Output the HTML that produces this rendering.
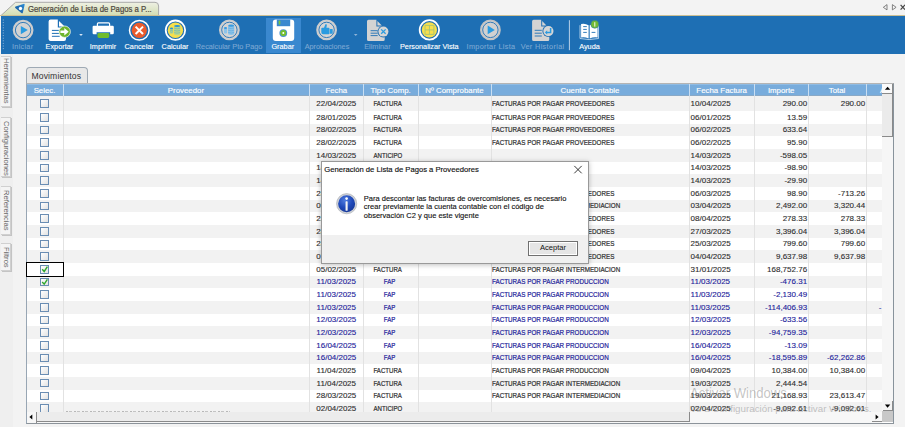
<!DOCTYPE html>
<html><head><meta charset="utf-8">
<style>
*{margin:0;padding:0;box-sizing:border-box}
html,body{width:905px;height:427px;overflow:hidden;background:#f3f3f3;font-family:"Liberation Sans",sans-serif}
.a{position:absolute}
svg{position:absolute;overflow:visible}
/* toolbar */
#tb{position:absolute;left:1px;top:16px;width:904px;height:38px;background:#1e6fb4}
.lab{position:absolute;top:41.7px;height:9px;line-height:9px;font-size:7.3px;color:#fff;white-space:nowrap;text-align:center;width:80px;-webkit-text-stroke:.12px #fff}
.lab.dis{color:#7ba7d3;-webkit-text-stroke:.1px #7ba7d3}
/* left tabs */
.vt{position:absolute;left:1px;width:9.8px;background:#f4f4f4;border:1px solid #d0d0d0;border-left:none;box-shadow:1px 1px 0 #c4c4c4}
.vtt{position:absolute;white-space:nowrap;font-size:7.6px;color:#666;transform-origin:0 0;transform:rotate(90deg)}
/* grid */
#grid{position:absolute;left:26px;top:83px;width:868px;height:341px;border:1px solid #98a6b4;background:#fff;overflow:hidden}
.r{position:absolute;left:26.5px;width:855.7px}
.g{background:#f2f2f2}
.w{background:#fff}
.vl{position:absolute;top:96px;width:1px;height:315.5px;background:#e2e2e2}
.hdr{position:absolute;left:26.5px;top:83.6px;width:855.7px;height:12.4px;background:#78acdc;border-top:1px solid #8fbbe3;border-bottom:1px solid #8aa9c6}
.hl{position:absolute;top:84.9px;height:12px;line-height:12px;font-size:7.85px;color:#fff;text-align:center;white-space:nowrap;-webkit-text-stroke:.15px #fff}
.hd{position:absolute;top:83.6px;width:1px;height:12px;background:#c9def2}
.tx{position:absolute;height:9px;line-height:9px;font-size:8px;color:#2e2e2e;white-space:nowrap;letter-spacing:0;-webkit-text-stroke:.12px #2e2e2e}
.c{text-align:center}
.rt{text-align:right}
.bl{color:#22229a;-webkit-text-stroke:.12px #22229a}
.tx i{font-style:normal;display:inline-block;transform:scaleX(.76);-webkit-text-stroke:.22px currentColor}
.tx.cp{transform:scaleX(.785);transform-origin:0 0;-webkit-text-stroke:.22px currentColor}
.msg{left:363.8px;font-size:7.5px;line-height:8.3px;color:#111;white-space:nowrap;-webkit-text-stroke:.12px #111}
.cb{position:absolute;left:40.2px;width:8.6px;height:8.6px;border:1px solid #6a8db3;background:linear-gradient(135deg,#fff,#e2e2e2)}
</style></head><body>

<!-- top strip -->
<svg width="905" height="16" style="left:0;top:0">
  <defs><linearGradient id="tg" x1="0" y1="0" x2="0" y2="1"><stop offset="0" stop-color="#eff1e4"/><stop offset="1" stop-color="#d2ddb2"/></linearGradient></defs>
  <path d="M1 15.5 L15.5 2.3 L155 2.3 Q158.6 2.3 158.6 6 L158.6 15.5 Z" fill="url(#tg)" stroke="#a9a9a9" stroke-width="1"/>
  <defs><linearGradient id="ic" x1="1" y1="0" x2="0" y2="1"><stop offset="0" stop-color="#2f8fd8"/><stop offset="1" stop-color="#164f93"/></linearGradient></defs>
  <path d="M15.6 6.6 L23.4 3.9 Q25 3.5 24.6 5 L22.9 12.6 Q22.5 14 21.4 13 L15.3 8 Q14.6 7 15.6 6.6Z" fill="url(#ic)"/>
  <circle cx="20.5" cy="8.5" r="1.7" fill="#fff"/>
  <line x1="0" y1="15.5" x2="905" y2="15.5" stroke="#cbbf94" stroke-width="1"/>
  <path d="M887 4.6 L883.3 7.3 L887 9.9 Z" fill="none" stroke="#666" stroke-width=".8"/>
  <path d="M892.4 4.6 L896.1 7.3 L892.4 9.9 Z" fill="none" stroke="#666" stroke-width=".8"/>
  <path d="M900.6 4.8 L905 9.7 M905 4.8 L900.6 9.7" stroke="#444" stroke-width="1.2"/>
</svg>
<div class="a" style="left:28px;top:4.5px;font-size:8.2px;line-height:10px;color:#4e4840;white-space:nowrap;-webkit-text-stroke:.2px #4e4840;transform:scaleX(.948);transform-origin:0 0">Generación de Lista de Pagos a P...</div>

<!-- toolbar -->
<div id="tb"></div>
<div class="a" style="left:265.7px;top:17.8px;width:35.4px;height:34.8px;background:#3a88cf"></div>
<svg width="905" height="54" style="left:0;top:0">
  <!-- grip -->
  <line x1="3.3" y1="19.5" x2="3.3" y2="49.5" stroke="#8fb6dd" stroke-width="1" stroke-dasharray="1 1.6"/>
  <!-- Iniciar -->
  <circle cx="23.1" cy="30.1" r="9.6" fill="#d3d3d3" stroke="#cdcdcd" stroke-width="1.6"/>
  <circle cx="23.1" cy="30.1" r="7.7" fill="none" stroke="#1e6fb4" stroke-width=".9"/>
  <path d="M20.8 26 L27.8 30.1 L20.8 34.2Z" fill="#2a9be0"/>
  <!-- Exportar -->
  <path d="M50.6 19.6 H57.8 V27.6 H66 V38.9 Q66 40.9 64 40.9 H50.6 Q48.6 40.9 48.6 38.9 V21.6 Q48.6 19.6 50.6 19.6Z" fill="#fff"/>
  <path d="M59 21 L64.6 26.6 L59 26.6Z" fill="#fff"/>
  <path d="M51.9 30.4 H59.7 M51.9 33.4 H59.7 M51.9 36.3 H59.7" stroke="#1e6fb4" stroke-width="1"/>
  <circle cx="64.7" cy="31.7" r="5.7" fill="#6db52e" stroke="#fff" stroke-width=".7"/>
  <path d="M60.4 30.4 H64.3 V27.9 L68.7 31.7 L64.3 35.5 V33 H60.4Z" fill="#fff"/>
  <path d="M79.2 34 L82.8 34 L81 36Z" fill="#d9e7f5"/>
  <!-- Imprimir -->
  <path d="M97.4 26 V23.9 Q97.4 22.9 98.4 22.9 H108.6 Q109.6 22.9 109.6 23.9 V26" fill="none" stroke="#fff" stroke-width="1.2"/>
  <path d="M93.8 25.8 H112.6 Q113.8 25.8 113.8 27 V33.1 Q113.8 34.3 112.6 34.3 H110.2 V32.3 H96.6 V34.3 H93.8 Q92.6 34.3 92.6 33.1 V27 Q92.6 25.8 93.8 25.8Z" fill="#fff"/>
  <rect x="97.5" y="32.9" width="11.7" height="5" rx="1.4" fill="#70bc2c"/>
  <!-- Cancelar -->
  <circle cx="139.3" cy="30.3" r="9.8" fill="#1e6fb4" stroke="#fff" stroke-width="1.5"/>
  <circle cx="139.3" cy="30.3" r="7.6" fill="#ea5b2c"/>
  <path d="M135.6 26.6 L143 34 M143 26.6 L135.6 34" stroke="#fff" stroke-width="2"/>
  <!-- Calcular -->
  <circle cx="175.45" cy="30.2" r="9.7" fill="#1e6fb4" stroke="#fff" stroke-width="1.8"/>
  <circle cx="175.45" cy="30.2" r="7.7" fill="#f7df4c"/>
  <path d="M169.9 28.2 V33.2 Q171.5 34.2 173.1 33.2 V28.2Z" fill="#b8d68a"/>
  <path d="M169.9 30 Q171.5 31 173.1 30 M169.9 31.7 Q171.5 32.7 173.1 31.7" fill="none" stroke="#5fb0c0" stroke-width=".6"/>
  <ellipse cx="171.5" cy="28.3" rx="1.6" ry=".9" fill="#2592d8"/>
  <path d="M174.1 26 V34.6 Q177.15 35.8 180.2 34.6 V26Z" fill="#b8d68a"/>
  <path d="M174.1 28.2 Q177.15 29.4 180.2 28.2 M174.1 30.4 Q177.15 31.6 180.2 30.4 M174.1 32.6 Q177.15 33.8 180.2 32.6" fill="none" stroke="#5fb0c0" stroke-width=".6"/>
  <ellipse cx="177.15" cy="26" rx="3.05" ry="1.1" fill="#2592d8"/>
  <!-- Recalcular -->
  <circle cx="229.4" cy="29.9" r="9.6" fill="#d5d5d5" stroke="#cdcdcd" stroke-width="1.6"/>
  <circle cx="229.4" cy="29.9" r="7.7" fill="none" stroke="#1e6fb4" stroke-width=".9"/>
  <path d="M223.9 27.9 V32.9 Q225.5 33.9 227.1 32.9 V27.9Z" fill="#8cc4ea"/>
  <ellipse cx="225.5" cy="28" rx="1.6" ry=".9" fill="#3a9be0"/>
  <path d="M228.1 25.7 V34.3 Q231.15 35.5 234.2 34.3 V25.7Z" fill="#8cc4ea"/>
  <path d="M228.1 28 Q231.15 29.2 234.2 28 M228.1 30.2 Q231.15 31.4 234.2 30.2 M228.1 32.4 Q231.15 33.6 234.2 32.4" fill="none" stroke="#5aa8de" stroke-width=".6"/>
  <ellipse cx="231.15" cy="25.7" rx="3.05" ry="1.1" fill="#3a9be0"/>
  <!-- Grabar -->
  <rect x="272.8" y="19.6" width="21.4" height="21.3" rx="3" fill="#fff"/>
  <rect x="276.8" y="19.6" width="13.4" height="6.6" fill="#3a88cf"/>
  <rect x="278.7" y="20.6" width="1.6" height="3.9" rx=".6" fill="#7cc83a"/>
  <circle cx="283.3" cy="33.1" r="3.9" fill="#4a92d6"/>
  <circle cx="283.3" cy="33.1" r="3" fill="#74c02e"/>
  <circle cx="283.3" cy="33.1" r="1" fill="#fff"/>
  <!-- Aprobaciones -->
  <circle cx="326.6" cy="29.9" r="9.6" fill="#d5d5d5" stroke="#cdcdcd" stroke-width="1.6"/>
  <circle cx="326.6" cy="29.9" r="7.7" fill="none" stroke="#1e6fb4" stroke-width=".9"/>
  <path d="M321.3 28.6 Q321.3 27.7 322.3 27.7 L324 27.7 L325.2 24.8 Q325.6 23.8 326.4 24.2 Q327 24.6 326.8 25.6 L326.4 27.7 L328.6 27.7 Q329.5 27.8 329.5 28.8 L329.5 33.4 Q329.5 34.2 328.6 34.2 L323.2 34.2 Q321.3 34.2 321.3 32.2Z" fill="#2a9be0"/>
  <rect x="329.9" y="28.9" width="2.8" height="4.9" rx=".5" fill="#2a9be0"/>
  <path d="M353.9 34 L357.5 34 L355.7 36Z" fill="#8fb3d6"/>
  <!-- Eliminar -->
  <path d="M368.5 19.7 H376.4 V26.6 H384.7 V39.4 Q384.7 40.9 383.2 40.9 H368.5 Q367 40.9 367 39.4 V21.2 Q367 19.7 368.5 19.7Z" fill="#d3d3d3"/>
  <path d="M377.4 21 L381.8 25.6 L377.4 25.6Z" fill="#d3d3d3"/>
  <path d="M370.6 30.7 H377.7 M370.6 33.2 H377.7 M370.6 35.6 H377.7" stroke="#1e6fb4" stroke-width=".9"/>
  <circle cx="383.4" cy="31.6" r="5.9" fill="#1e6fb4"/>
  <circle cx="383.4" cy="31.6" r="5" fill="#d6d6d6"/>
  <path d="M381.2 29.4 L385.6 33.8 M385.6 29.4 L381.2 33.8" stroke="#2a9be0" stroke-width="1.3"/>
  <!-- Personalizar Vista -->
  <circle cx="429.4" cy="29.9" r="9.7" fill="#1e6fb4" stroke="#fff" stroke-width="1.8"/>
  <circle cx="429.4" cy="29.9" r="7.6" fill="#f7df4c"/>
  <path d="M425 25.4 H433.9 V34.4 H425Z M429.45 25.4 V34.4 M425 29.9 H433.9" fill="none" stroke="#9cc27e" stroke-width=".8"/>
  <!-- Importar Lista -->
  <circle cx="490.4" cy="29.9" r="9.6" fill="#d1d1d1" stroke="#c4c4c4" stroke-width="1.6"/>
  <circle cx="490.4" cy="29.9" r="7.7" fill="none" stroke="#1e6fb4" stroke-width=".9"/>
  <path d="M487.7 25.5 L494.8 29.9 L487.7 34.3Z" fill="#2a9be0"/>
  <!-- Ver Historial -->
  <path d="M533.6 19.7 H541.2 V26.6 H549.3 V39.4 Q549.3 40.9 547.8 40.9 H533.6 Q532.1 40.9 532.1 39.4 V21.2 Q532.1 19.7 533.6 19.7Z" fill="#d3d3d3"/>
  <path d="M542.2 21 L546.4 25.6 L542.2 25.6Z" fill="#d3d3d3"/>
  <path d="M534.7 30.3 H541.8 M534.7 33.2 H541.8 M534.7 36 H541.8" stroke="#1e6fb4" stroke-width=".9"/>
  <circle cx="548.4" cy="31.1" r="6" fill="#1e6fb4"/>
  <circle cx="548.4" cy="31.1" r="5.1" fill="#d6d6d6"/>
  <path d="M550.6 28 V32.4 H546.4" fill="none" stroke="#2a9be0" stroke-width="1.5"/>
  <path d="M547.2 30.2 L544.9 32.4 L547.2 34.6Z" fill="#2a9be0"/>
  <!-- separator -->
  <line x1="569.4" y1="20.2" x2="569.4" y2="50.2" stroke="#dfeaf6" stroke-width=".8"/>
  <!-- Ayuda -->
  <path d="M580 25.2 L580 38.5 L589.1 39.6 L598.5 38.5 L598.5 25.2" fill="none" stroke="#cfe2f4" stroke-width=".8"/>
  <path d="M581.1 24 Q585 23 588.6 25.2 V38.6 Q585 36.6 581.1 37.4Z" fill="#fff"/>
  <path d="M597.6 24 Q593.4 23 589.7 25.2 V38.6 Q593.4 36.6 597.6 37.4Z" fill="#fff"/>
  <path d="M583.2 26.6 H586.8 M583.2 29.4 H586.8 M583.2 32.4 H586.8 M591.6 32.4 H595.4" stroke="#1e6fb4" stroke-width=".9"/>
  <circle cx="594.8" cy="24.3" r="4" fill="#72bb34" stroke="#1e6fb4" stroke-width=".5"/>
  <line x1="594.8" y1="22.2" x2="594.8" y2="26.6" stroke="#fff" stroke-width=".9"/>
</svg>
<div class="lab dis" style="left:-17.3px;letter-spacing:.25px">Iniciar</div>
<div class="lab" style="left:19.4px">Exportar</div>
<div class="lab" style="left:63px">Imprimir</div>
<div class="lab" style="left:99.2px">Cancelar</div>
<div class="lab" style="left:135px">Calcular</div>
<div class="lab dis" style="left:189.1px">Recalcular Pto Pago</div>
<div class="lab" style="left:242.8px">Grabar</div>
<div class="lab dis" style="left:287px">Aprobaciones</div>
<div class="lab dis" style="left:337.4px">Eliminar</div>
<div class="lab" style="left:389.3px">Personalizar Vista</div>
<div class="lab dis" style="left:451px;letter-spacing:.3px">Importar Lista</div>
<div class="lab dis" style="left:502.6px;letter-spacing:.35px">Ver Historial</div>
<div class="lab" style="left:549.5px">Ayuda</div>

<!-- left panel -->
<div class="a" style="left:0;top:54px;width:13px;height:373px;background:#efefef"></div>
<div class="vt" style="top:55.7px;height:51.7px"></div>
<div class="vtt" style="left:11px;top:58px">Herramientas</div>
<div class="vt" style="top:116.9px;height:60.3px"></div>
<div class="vtt" style="left:11px;top:120.7px">Configuraciones</div>
<div class="vt" style="top:186.3px;height:48.7px"></div>
<div class="vtt" style="left:11px;top:190.3px">Referencias</div>
<div class="vt" style="top:243.2px;height:28.3px"></div>
<div class="vtt" style="left:11px;top:246.8px">Filtros</div>

<!-- Movimientos tab -->
<div class="a" style="left:26.2px;top:67.1px;width:61.4px;height:17px;background:#e8e8e8;border:1px solid #9ea9b4;border-bottom:none;border-radius:4px 4px 0 0"></div>
<div class="a" style="left:31.5px;top:70.5px;font-size:8.6px;line-height:10px;color:#333;white-space:nowrap;letter-spacing:.12px">Movimientos</div>

<!-- grid -->
<div class="a" style="left:26px;top:83px;width:868px;height:340.5px;border:1px solid #98a6b4;border-top-color:#b4b4b4;border-right:1.6px solid #88939c;border-bottom:1.4px solid #8c939a;background:#fff"></div>
<div class="hdr"></div>
<span class="hl" style="left:26.5px;width:36.1px">Selec.</span><span class="hl" style="left:62.6px;width:246.7px">Proveedor</span><div class="hd" style="left:62.6px"></div><span class="hl" style="left:309.3px;width:54.0px">Fecha</span><div class="hd" style="left:309.3px"></div><span class="hl" style="left:363.3px;width:54.6px">Tipo Comp.</span><div class="hd" style="left:363.3px"></div><span class="hl" style="left:417.9px;width:73.1px">Nº Comprobante</span><div class="hd" style="left:417.9px"></div><span class="hl" style="left:491.0px;width:198.0px">Cuenta Contable</span><div class="hd" style="left:491.0px"></div><span class="hl" style="left:689.0px;width:65.3px">Fecha Factura</span><div class="hd" style="left:689.0px"></div><span class="hl" style="left:754.3px;width:53.8px">Importe</span><div class="hd" style="left:754.3px"></div><span class="hl" style="left:808.1px;width:58.0px">Total</span><div class="hd" style="left:808.1px"></div><span class="hl" style="left:876.6px;width:12.0px">A</span><div class="hd" style="left:866.1px"></div>
<div class="r g" style="top:96.00px;height:15.00px"></div><div class="cb" style="top:99.20px"></div><span class="tx c" style="left:309.3px;width:54.0px;top:98.90px">22/04/2025</span><span class="tx c" style="left:360.3px;width:54.6px;top:98.90px"><i class="cp">FACTURA</i></span><span class="tx cp" style="left:492.4px;top:98.90px">FACTURAS POR PAGAR PROVEEDORES</span><span class="tx" style="left:690.6px;top:98.90px">10/04/2025</span><span class="tx rt" style="left:754.3px;width:52.8px;top:98.90px">290.00</span><span class="tx rt" style="left:808.1px;width:57.1px;top:98.90px">290.00</span>
<div class="r w" style="top:111.00px;height:12.66px"></div><div class="cb" style="top:113.03px"></div><span class="tx c" style="left:309.3px;width:54.0px;top:112.73px">28/01/2025</span><span class="tx c" style="left:360.3px;width:54.6px;top:112.73px"><i class="cp">FACTURA</i></span><span class="tx cp" style="left:492.4px;top:112.73px">FACTURAS POR PAGAR PROVEEDORES</span><span class="tx" style="left:690.6px;top:112.73px">06/01/2025</span><span class="tx rt" style="left:754.3px;width:52.8px;top:112.73px">13.59</span>
<div class="r g" style="top:123.66px;height:12.66px"></div><div class="cb" style="top:125.69px"></div><span class="tx c" style="left:309.3px;width:54.0px;top:125.39px">28/02/2025</span><span class="tx c" style="left:360.3px;width:54.6px;top:125.39px"><i class="cp">FACTURA</i></span><span class="tx cp" style="left:492.4px;top:125.39px">FACTURAS POR PAGAR PROVEEDORES</span><span class="tx" style="left:690.6px;top:125.39px">06/02/2025</span><span class="tx rt" style="left:754.3px;width:52.8px;top:125.39px">633.64</span>
<div class="r w" style="top:136.32px;height:12.66px"></div><div class="cb" style="top:138.35px"></div><span class="tx c" style="left:309.3px;width:54.0px;top:138.05px">28/02/2025</span><span class="tx c" style="left:360.3px;width:54.6px;top:138.05px"><i class="cp">FACTURA</i></span><span class="tx cp" style="left:492.4px;top:138.05px">FACTURAS POR PAGAR PROVEEDORES</span><span class="tx" style="left:690.6px;top:138.05px">06/02/2025</span><span class="tx rt" style="left:754.3px;width:52.8px;top:138.05px">95.90</span>
<div class="r g" style="top:148.98px;height:12.66px"></div><div class="cb" style="top:151.01px"></div><span class="tx c" style="left:309.3px;width:54.0px;top:150.71px">14/03/2025</span><span class="tx c" style="left:360.9px;width:54.6px;top:150.71px"><i class="cp">ANTICIPO</i></span><span class="tx" style="left:690.6px;top:150.71px">14/03/2025</span><span class="tx rt" style="left:754.3px;width:52.8px;top:150.71px">-598.05</span>
<div class="r w" style="top:161.64px;height:12.66px"></div><div class="cb" style="top:163.67px"></div><span class="tx c" style="left:309.3px;width:54.0px;top:163.37px">14/03/2025</span><span class="tx c" style="left:360.9px;width:54.6px;top:163.37px"><i class="cp">ANTICIPO</i></span><span class="tx" style="left:690.6px;top:163.37px">14/03/2025</span><span class="tx rt" style="left:754.3px;width:52.8px;top:163.37px">-98.90</span>
<div class="r g" style="top:174.30px;height:12.66px"></div><div class="cb" style="top:176.33px"></div><span class="tx c" style="left:309.3px;width:54.0px;top:176.03px">14/03/2025</span><span class="tx c" style="left:360.9px;width:54.6px;top:176.03px"><i class="cp">ANTICIPO</i></span><span class="tx" style="left:690.6px;top:176.03px">14/03/2025</span><span class="tx rt" style="left:754.3px;width:52.8px;top:176.03px">-29.90</span>
<div class="r w" style="top:186.96px;height:12.66px"></div><div class="cb" style="top:188.99px"></div><span class="tx c" style="left:309.3px;width:54.0px;top:188.69px">28/02/2025</span><span class="tx c" style="left:360.3px;width:54.6px;top:188.69px"><i class="cp">FACTURA</i></span><span class="tx cp" style="left:492.4px;top:188.69px">FACTURAS POR PAGAR PROVEEDORES</span><span class="tx" style="left:690.6px;top:188.69px">06/03/2025</span><span class="tx rt" style="left:754.3px;width:52.8px;top:188.69px">98.90</span><span class="tx rt" style="left:808.1px;width:57.1px;top:188.69px">-713.26</span>
<div class="r g" style="top:199.62px;height:12.66px"></div><div class="cb" style="top:201.65px"></div><span class="tx c" style="left:309.3px;width:54.0px;top:201.35px">05/04/2025</span><span class="tx c" style="left:360.3px;width:54.6px;top:201.35px"><i class="cp">FACTURA</i></span><span class="tx cp" style="left:492.4px;top:201.35px">FACTURAS POR PAGAR INTERMEDIACION</span><span class="tx" style="left:690.6px;top:201.35px">03/04/2025</span><span class="tx rt" style="left:754.3px;width:52.8px;top:201.35px">2,492.00</span><span class="tx rt" style="left:808.1px;width:57.1px;top:201.35px">3,320.44</span>
<div class="r w" style="top:212.28px;height:12.66px"></div><div class="cb" style="top:214.31px"></div><span class="tx c" style="left:309.3px;width:54.0px;top:214.01px">22/04/2025</span><span class="tx c" style="left:360.3px;width:54.6px;top:214.01px"><i class="cp">FACTURA</i></span><span class="tx cp" style="left:492.4px;top:214.01px">FACTURAS POR PAGAR PROVEEDORES</span><span class="tx" style="left:690.6px;top:214.01px">08/04/2025</span><span class="tx rt" style="left:754.3px;width:52.8px;top:214.01px">278.33</span><span class="tx rt" style="left:808.1px;width:57.1px;top:214.01px">278.33</span>
<div class="r g" style="top:224.94px;height:12.66px"></div><div class="cb" style="top:226.97px"></div><span class="tx c" style="left:309.3px;width:54.0px;top:226.67px">28/03/2025</span><span class="tx c" style="left:360.3px;width:54.6px;top:226.67px"><i class="cp">FACTURA</i></span><span class="tx cp" style="left:492.4px;top:226.67px">FACTURAS POR PAGAR PROVEEDORES</span><span class="tx" style="left:690.6px;top:226.67px">27/03/2025</span><span class="tx rt" style="left:754.3px;width:52.8px;top:226.67px">3,396.04</span><span class="tx rt" style="left:808.1px;width:57.1px;top:226.67px">3,396.04</span>
<div class="r w" style="top:237.60px;height:12.66px"></div><div class="cb" style="top:239.63px"></div><span class="tx c" style="left:309.3px;width:54.0px;top:239.33px">28/03/2025</span><span class="tx c" style="left:360.3px;width:54.6px;top:239.33px"><i class="cp">FACTURA</i></span><span class="tx cp" style="left:492.4px;top:239.33px">FACTURAS POR PAGAR PROVEEDORES</span><span class="tx" style="left:690.6px;top:239.33px">25/03/2025</span><span class="tx rt" style="left:754.3px;width:52.8px;top:239.33px">799.60</span><span class="tx rt" style="left:808.1px;width:57.1px;top:239.33px">799.60</span>
<div class="r g" style="top:250.26px;height:12.66px"></div><div class="cb" style="top:252.29px"></div><span class="tx c" style="left:309.3px;width:54.0px;top:251.99px">07/04/2025</span><span class="tx c" style="left:360.3px;width:54.6px;top:251.99px"><i class="cp">FACTURA</i></span><span class="tx cp" style="left:492.4px;top:251.99px">FACTURAS POR PAGAR PROVEEDORES</span><span class="tx" style="left:690.6px;top:251.99px">04/04/2025</span><span class="tx rt" style="left:754.3px;width:52.8px;top:251.99px">9,637.98</span><span class="tx rt" style="left:808.1px;width:57.1px;top:251.99px">9,637.98</span>
<div class="r w" style="top:262.92px;height:12.66px"></div><div class="cb on" style="top:264.95px"></div><span class="tx c" style="left:309.3px;width:54.0px;top:264.65px">05/02/2025</span><span class="tx c" style="left:360.3px;width:54.6px;top:264.65px"><i class="cp">FACTURA</i></span><span class="tx cp" style="left:492.4px;top:264.65px">FACTURAS POR PAGAR INTERMEDIACION</span><span class="tx" style="left:690.6px;top:264.65px">31/01/2025</span><span class="tx rt" style="left:754.3px;width:52.8px;top:264.65px">168,752.76</span>
<div class="r g b" style="top:275.58px;height:12.66px"></div><div class="cb on" style="top:277.61px"></div><span class="tx c bl" style="left:309.3px;width:54.0px;top:277.31px">11/03/2025</span><span class="tx c bl" style="left:362.5px;width:54.6px;top:277.31px"><i class="cp">FAP</i></span><span class="tx cp bl" style="left:492.4px;top:277.31px">FACTURAS POR PAGAR PRODUCCION</span><span class="tx bl" style="left:690.6px;top:277.31px">11/03/2025</span><span class="tx rt bl" style="left:754.3px;width:52.8px;top:277.31px">-476.31</span>
<div class="r w b" style="top:288.24px;height:12.66px"></div><div class="cb" style="top:290.27px"></div><span class="tx c bl" style="left:309.3px;width:54.0px;top:289.97px">11/03/2025</span><span class="tx c bl" style="left:362.5px;width:54.6px;top:289.97px"><i class="cp">FAP</i></span><span class="tx cp bl" style="left:492.4px;top:289.97px">FACTURAS POR PAGAR PRODUCCION</span><span class="tx bl" style="left:690.6px;top:289.97px">11/03/2025</span><span class="tx rt bl" style="left:754.3px;width:52.8px;top:289.97px">-2,130.49</span>
<div class="r g b" style="top:300.90px;height:12.66px"></div><div class="cb" style="top:302.93px"></div><span class="tx c bl" style="left:309.3px;width:54.0px;top:302.63px">11/03/2025</span><span class="tx c bl" style="left:362.5px;width:54.6px;top:302.63px"><i class="cp">FAP</i></span><span class="tx cp bl" style="left:492.4px;top:302.63px">FACTURAS POR PAGAR PRODUCCION</span><span class="tx bl" style="left:690.6px;top:302.63px">11/03/2025</span><span class="tx rt bl" style="left:754.3px;width:52.8px;top:302.63px">-114,406.93</span>
<div class="r w b" style="top:313.56px;height:12.66px"></div><div class="cb" style="top:315.59px"></div><span class="tx c bl" style="left:309.3px;width:54.0px;top:315.29px">12/03/2025</span><span class="tx c bl" style="left:362.5px;width:54.6px;top:315.29px"><i class="cp">FAP</i></span><span class="tx cp bl" style="left:492.4px;top:315.29px">FACTURAS POR PAGAR PRODUCCION</span><span class="tx bl" style="left:690.6px;top:315.29px">12/03/2025</span><span class="tx rt bl" style="left:754.3px;width:52.8px;top:315.29px">-633.56</span>
<div class="r g b" style="top:326.22px;height:12.66px"></div><div class="cb" style="top:328.25px"></div><span class="tx c bl" style="left:309.3px;width:54.0px;top:327.95px">12/03/2025</span><span class="tx c bl" style="left:362.5px;width:54.6px;top:327.95px"><i class="cp">FAP</i></span><span class="tx cp bl" style="left:492.4px;top:327.95px">FACTURAS POR PAGAR PRODUCCION</span><span class="tx bl" style="left:690.6px;top:327.95px">12/03/2025</span><span class="tx rt bl" style="left:754.3px;width:52.8px;top:327.95px">-94,759.35</span>
<div class="r w b" style="top:338.88px;height:12.66px"></div><div class="cb" style="top:340.91px"></div><span class="tx c bl" style="left:309.3px;width:54.0px;top:340.61px">16/04/2025</span><span class="tx c bl" style="left:362.5px;width:54.6px;top:340.61px"><i class="cp">FAP</i></span><span class="tx cp bl" style="left:492.4px;top:340.61px">FACTURAS POR PAGAR PRODUCCION</span><span class="tx bl" style="left:690.6px;top:340.61px">16/04/2025</span><span class="tx rt bl" style="left:754.3px;width:52.8px;top:340.61px">-13.09</span>
<div class="r g b" style="top:351.54px;height:12.66px"></div><div class="cb" style="top:353.57px"></div><span class="tx c bl" style="left:309.3px;width:54.0px;top:353.27px">16/04/2025</span><span class="tx c bl" style="left:362.5px;width:54.6px;top:353.27px"><i class="cp">FAP</i></span><span class="tx cp bl" style="left:492.4px;top:353.27px">FACTURAS POR PAGAR PRODUCCION</span><span class="tx bl" style="left:690.6px;top:353.27px">16/04/2025</span><span class="tx rt bl" style="left:754.3px;width:52.8px;top:353.27px">-18,595.89</span><span class="tx rt bl" style="left:808.1px;width:57.1px;top:353.27px">-62,262.86</span>
<div class="r w" style="top:364.20px;height:12.66px"></div><div class="cb" style="top:366.23px"></div><span class="tx c" style="left:309.3px;width:54.0px;top:365.93px">11/04/2025</span><span class="tx c" style="left:360.3px;width:54.6px;top:365.93px"><i class="cp">FACTURA</i></span><span class="tx cp" style="left:492.4px;top:365.93px">FACTURAS POR PAGAR PRODUCCION</span><span class="tx" style="left:690.6px;top:365.93px">09/04/2025</span><span class="tx rt" style="left:754.3px;width:52.8px;top:365.93px">10,384.00</span><span class="tx rt" style="left:808.1px;width:57.1px;top:365.93px">10,384.00</span>
<div class="r g" style="top:376.86px;height:12.66px"></div><div class="cb" style="top:378.89px"></div><span class="tx c" style="left:309.3px;width:54.0px;top:378.59px">11/04/2025</span><span class="tx c" style="left:360.3px;width:54.6px;top:378.59px"><i class="cp">FACTURA</i></span><span class="tx cp" style="left:492.4px;top:378.59px">FACTURAS POR PAGAR INTERMEDIACION</span><span class="tx" style="left:690.6px;top:378.59px">19/03/2025</span><span class="tx rt" style="left:754.3px;width:52.8px;top:378.59px">2,444.54</span>
<div class="r w" style="top:389.52px;height:12.66px"></div><div class="cb" style="top:391.55px"></div><span class="tx c" style="left:309.3px;width:54.0px;top:391.25px">28/03/2025</span><span class="tx c" style="left:360.3px;width:54.6px;top:391.25px"><i class="cp">FACTURA</i></span><span class="tx cp" style="left:492.4px;top:391.25px">FACTURAS POR PAGAR INTERMEDIACION</span><span class="tx" style="left:690.6px;top:391.25px">19/03/2025</span><span class="tx rt" style="left:754.3px;width:52.8px;top:391.25px">21,168.93</span><span class="tx rt" style="left:808.1px;width:57.1px;top:391.25px">23,613.47</span>
<div class="r g" style="top:402.18px;height:12.66px"></div><div class="cb" style="top:404.21px"></div><span class="tx c" style="left:309.3px;width:54.0px;top:403.91px">02/04/2025</span><span class="tx c" style="left:360.9px;width:54.6px;top:403.91px"><i class="cp">ANTICIPO</i></span><span class="tx" style="left:690.6px;top:403.91px">02/04/2025</span><span class="tx rt" style="left:754.3px;width:52.8px;top:403.91px">-9,092.61</span><span class="tx rt" style="left:808.1px;width:57.1px;top:403.91px">-9,092.61</span>
<div class="vl" style="left:62.6px"></div><div class="vl" style="left:309.3px"></div><div class="vl" style="left:363.3px"></div><div class="vl" style="left:417.9px"></div><div class="vl" style="left:491.0px"></div><div class="vl" style="left:689.0px"></div><div class="vl" style="left:754.3px"></div><div class="vl" style="left:808.1px"></div><div class="vl" style="left:866.1px"></div>

<!-- focus rect -->
<div class="a" style="left:26.4px;top:262px;width:37.5px;height:14.6px;border:1.5px solid #000"></div>
<svg width="905" height="427" style="left:0;top:0">
  <path d="M42.2 269.3 L44.2 271.5 L47.4 266.6" fill="none" stroke="#2fa82f" stroke-width="1.4"/>
  <path d="M42.2 282 L44.2 284.2 L47.4 279.3" fill="none" stroke="#2fa82f" stroke-width="1.4"/>
</svg>
<!-- faint clipped text row 25 -->
<div class="a" style="left:66px;top:410.6px;width:164px;height:1px;background:repeating-linear-gradient(90deg,#a8a8a8 0 2px,transparent 2px 3px,#b8b8b8 3px 6px,transparent 6px 8px);opacity:.8"></div>
<span class="tx bl" style="left:878.8px;top:302.9px">-</span>

<!-- vertical scrollbar -->
<div class="a" style="left:882.2px;top:84px;width:11px;height:327.5px;background:#f6f6f6"></div>
<div class="a" style="left:882.2px;top:83.8px;width:10.8px;height:9.8px;background:#fafafa;border-right:1.2px solid #8a8a8a;border-bottom:1.2px solid #8a8a8a"></div>
<div class="a" style="left:882.2px;top:93.6px;width:10.8px;height:43.6px;background:#ebebeb;border-right:1.2px solid #8a8a8a;border-bottom:1.6px solid #8a8a8a"></div>
<div class="a" style="left:882.5px;top:400.8px;width:10.5px;height:10.6px;background:#f4f4f4;border-right:1.2px solid #8a8a8a;border-bottom:1.2px solid #8a8a8a"></div>
<!-- horizontal scrollbar -->
<div class="a" style="left:26.6px;top:411.5px;width:855.6px;height:11px;background:#f7f7f7"></div>
<div class="a" style="left:26.6px;top:411.5px;width:10.4px;height:11px;background:#f7f7f7;border-right:1.4px solid #8a8a8a"></div>
<div class="a" style="left:37px;top:411.5px;width:653.2px;height:10.8px;background:#ececec;border-right:1.3px solid #8a8a8a;border-bottom:1.4px solid #8a8a8a"></div>
<div class="a" style="left:872px;top:411.7px;width:10.5px;height:10.5px;background:#f7f7f7;border-right:1.2px solid #8a8a8a;border-bottom:1.2px solid #8a8a8a"></div>
<div class="a" style="left:882.2px;top:411.3px;width:11px;height:11px;background:#c8c8c8"></div>

<svg width="905" height="427" style="left:0;top:0">
  <path d="M884.9 89.7 L887.6 86.8 L890.3 89.7Z" fill="#000"/>
  <path d="M884.9 404.6 L887.6 407.8 L890.3 404.6Z" fill="#000"/>
  <path d="M29.4 417 L32.3 414.4 L32.3 419.6Z" fill="#000"/>
  <path d="M875.6 414.4 L878.6 417 L875.6 419.6Z" fill="#000"/>
</svg>
<!-- watermark -->
<div class="a" style="left:689.5px;top:385.6px;font-size:13.8px;line-height:16px;color:rgba(125,125,125,.45);white-space:nowrap;transform:scaleX(.95);transform-origin:0 0">Activar Windows</div>
<div class="a" style="left:689.5px;top:403.6px;font-size:9.1px;line-height:10px;color:rgba(125,125,125,.45);white-space:nowrap;transform:scaleX(1.075);transform-origin:0 0">Ve a Configuración para activar Windows.</div>

<!-- dialog -->
<div class="a" style="left:321px;top:161px;width:268px;height:102.5px;background:#fff;border:1px solid #999;box-shadow:0 1px 5px rgba(0,0,0,.25)"></div>
<div class="a" style="left:322px;top:235px;width:266px;height:27.5px;background:#f0f0f0"></div>
<div class="a" style="left:324.2px;top:165.3px;font-size:7.65px;line-height:10px;color:#111;white-space:nowrap;-webkit-text-stroke:.15px #111">Generación de Lista de Pagos a Proveedores</div>
<svg width="905" height="427" style="left:0;top:0">
  <path d="M574.3 165.9 L581.7 173.3 M581.7 165.9 L574.3 173.3" stroke="#222" stroke-width=".9"/>
  <defs><radialGradient id="ig" cx=".4" cy=".3" r=".8"><stop offset="0" stop-color="#4f7ce0"/><stop offset=".55" stop-color="#1f48b8"/><stop offset="1" stop-color="#163690"/></radialGradient></defs>
  <circle cx="346.65" cy="203.7" r="10.1" fill="#cfd2d8" stroke="#a4a8ae" stroke-width=".6"/>
  <circle cx="346.65" cy="203.7" r="8.5" fill="url(#ig)"/>
  <circle cx="346.6" cy="198.6" r="1.3" fill="#fff"/>
  <rect x="345.55" y="201.3" width="2.1" height="9.5" rx=".6" fill="#f4f4f4"/>
</svg>
<div class="a msg" style="top:194.9px">Para descontar las facturas de overcomisiones, es necesario</div>
<div class="a msg" style="top:203.2px">crear previamente la cuenta contable con el código de</div>
<div class="a msg" style="top:211.5px">observación C2 y que este vigente</div>
<div class="a" style="left:528.2px;top:240.8px;width:49.6px;height:15.1px;background:#e5e5e5;border:1.2px solid #707070;box-shadow:inset 0 0 0 1px #fff"></div>
<div class="a" style="left:528.2px;top:243.1px;width:49.6px;text-align:center;font-size:7.6px;line-height:10px;color:#111">Aceptar</div>

</body></html>
